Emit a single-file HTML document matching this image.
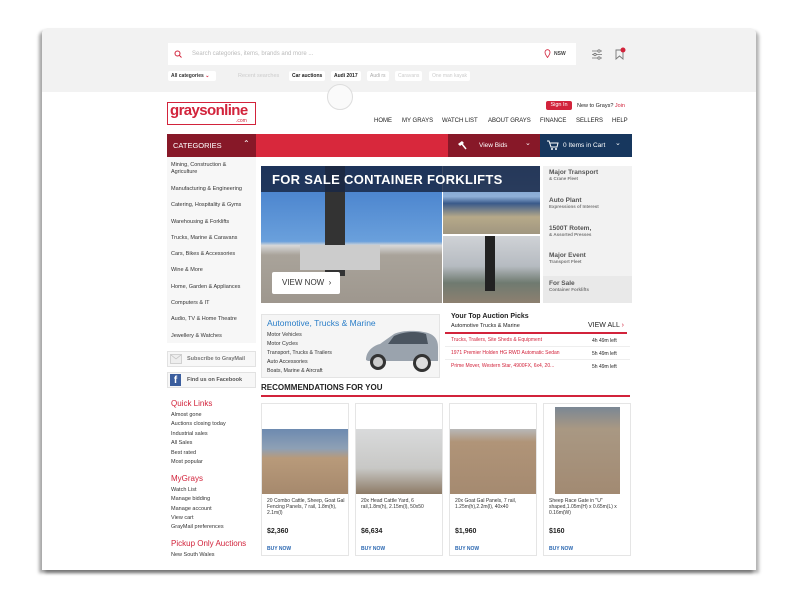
<!DOCTYPE html>
<html><head><meta charset="utf-8"><style>
*{box-sizing:border-box;margin:0;padding:0}
body{width:800px;height:600px;background:#fff;font-family:"Liberation Sans",sans-serif;position:relative;overflow:hidden;color:#222}
.a{position:absolute}
#frame{left:42px;top:28px;width:714px;height:542px;background:#fff;border-radius:6px 6px 0 0;box-shadow:-3px 3px 3px rgba(0,0,0,.35),3px 3px 3px rgba(0,0,0,.3);overflow:hidden}
.t{font-size:6px;white-space:nowrap}
.chip{position:absolute;top:71px;height:10px;background:#fff;font-size:5px;line-height:10px;padding:0 3px;border-radius:2px}
.nav{font-size:6px;top:118px}
.cat{position:absolute;left:171px;font-size:5.5px;color:#333;line-height:7px}
.rl{position:absolute;left:549px;font-size:6.5px;font-weight:bold;color:#555}
.rl small{display:block;font-size:4.5px;color:#777}
.ql{position:absolute;left:171px;font-size:5.5px;color:#333}
.h{position:absolute;left:171px;font-size:8px;color:#d2233b}
.card{position:absolute;top:403px;width:88px;height:153px;border:1px solid #e5e5e5;background:#fff}
.card .d{position:absolute;left:5px;top:94px;width:80px;font-size:5px;line-height:6px;color:#333}
.card .p{position:absolute;left:5px;top:124px;font-size:7px;font-weight:bold}
.card .b{position:absolute;left:5px;top:142px;font-size:5px;font-weight:bold;color:#2a67b1}
.img{position:absolute;left:0;top:25px;width:86px;height:65px;background:linear-gradient(#6d8ab0 0,#8ea0b5 30%,#b89a7a 45%,#a6896d 100%)}
</style></head><body>
<div id="frame" class="a"></div>
<div class="a" style="left:42px;top:28px;width:714px;height:64px;background:#f2f2f2;border-radius:6px 6px 0 0"></div>
<div class="a" style="left:168px;top:43px;width:408px;height:22px;background:#fff"></div>
<svg class="a" style="left:174px;top:50px" width="8" height="8"><circle cx="3.5" cy="3.5" r="2.5" fill="none" stroke="#d2233b" stroke-width="1"/><line x1="5.3" y1="5.3" x2="7.5" y2="7.5" stroke="#d2233b"/></svg>
<div class="a t" style="left:192px;top:51px;color:#bbb">Search categories, items, brands and more ...</div>
<svg class="a" style="left:544px;top:49px" width="7" height="9"><path d="M3.5 8.5C1 5 1 4 1 3.2a2.5 2.5 0 015 0C6 4 6 5 3.5 8.5z" fill="none" stroke="#d2233b" stroke-width=".8"/></svg>
<div class="a t" style="left:554px;top:51px;font-size:5px;font-weight:bold;color:#444">NSW</div>
<svg class="a" style="left:591px;top:49px" width="12" height="11" stroke="#777" stroke-width=".8"><line x1="1" y1="2" x2="11" y2="2"/><line x1="1" y1="5.5" x2="11" y2="5.5"/><line x1="1" y1="9" x2="11" y2="9"/><circle cx="8" cy="2" r="1.2" fill="#f2f2f2"/><circle cx="4" cy="5.5" r="1.2" fill="#f2f2f2"/><circle cx="8" cy="9" r="1.2" fill="#f2f2f2"/></svg>
<svg class="a" style="left:614px;top:46px" width="12" height="14"><path d="M2 4h7v9l-3.5-3L2 13z" fill="none" stroke="#777" stroke-width=".9"/><circle cx="9" cy="4" r="2.5" fill="#d2233b"/></svg>
<div class="chip" style="left:168px;width:48px;font-weight:bold;color:#333">All categories <span style="color:#d2233b">⌄</span></div>
<div class="a t" style="left:238px;top:73px;color:#ccc;font-size:5.5px">Recent searches</div>
<div class="chip" style="left:289px;font-weight:bold">Car auctions</div>
<div class="chip" style="left:331px;font-weight:bold">Audi 2017</div>
<div class="chip" style="left:367px;color:#aaa">Audi rs</div>
<div class="chip" style="left:395px;color:#ccc">Caravans</div>
<div class="chip" style="left:429px;color:#ccc">One man kayak</div>
<div class="a" style="left:327px;top:84px;width:26px;height:26px;border-radius:50%;border:1.5px solid #ddd;background:#fafafa"></div>
<div class="a" style="left:167px;top:102px;width:89px;height:23px;border:1.5px solid #d2233b;background:#fff"></div>
<div class="a" style="left:170px;top:102px;font-size:15px;font-weight:bold;color:#d2233b;letter-spacing:-.6px">graysonline</div>
<div class="a" style="left:236px;top:118px;font-size:5px;color:#d2233b">.com</div>
<div class="a" style="left:546px;top:101px;width:26px;height:9px;background:#d2233b;border-radius:2px;color:#fff;font-size:5.5px;text-align:center;line-height:9px">Sign In</div>
<div class="a t" style="left:577px;top:103px;font-size:5.5px">New to Grays? <span style="color:#d2233b">Join</span></div>
<div class="a nav" style="left:374px">HOME</div>
<div class="a nav" style="left:402px">MY GRAYS</div>
<div class="a nav" style="left:442px">WATCH LIST</div>
<div class="a nav" style="left:488px">ABOUT GRAYS</div>
<div class="a nav" style="left:540px">FINANCE</div>
<div class="a nav" style="left:576px">SELLERS</div>
<div class="a nav" style="left:612px">HELP</div>
<div class="a" style="left:167px;top:134px;width:465px;height:23px;background:#d8283c"></div>
<div class="a" style="left:167px;top:134px;width:89px;height:23px;background:#871828"></div>
<div class="a" style="left:173px;top:141px;color:#fff;font-size:7.5px">CATEGORIES</div>
<div class="a" style="left:243px;top:139px;color:#fff;font-size:8px">⌃</div>
<div class="a" style="left:448px;top:134px;width:92px;height:23px;background:#871828"></div>
<svg class="a" style="left:456px;top:140px" width="11" height="10"><path d="M2 4l4-3 2 2-4 3z" fill="#fff"/><line x1="6" y1="4" x2="10" y2="9" stroke="#fff" stroke-width="1.5"/></svg>
<div class="a" style="left:479px;top:142px;color:#fff;font-size:6.5px">View Bids</div>
<div class="a" style="left:525px;top:139px;color:#fff;font-size:7px">⌄</div>
<div class="a" style="left:540px;top:134px;width:92px;height:23px;background:#17375e"></div>
<svg class="a" style="left:547px;top:140px" width="12" height="10"><path d="M0 1h2l2 6h6l1-4H3" fill="none" stroke="#fff"/><circle cx="5" cy="9" r="1" fill="#fff"/><circle cx="9" cy="9" r="1" fill="#fff"/></svg>
<div class="a" style="left:563px;top:142px;color:#fff;font-size:6.5px">0 Items in Cart</div>
<div class="a" style="left:615px;top:139px;color:#fff;font-size:7px">⌄</div>
<div class="a" style="left:167px;top:157px;width:89px;height:186px;background:#f7f7f7"></div>
<div class="cat" style="top:162px">Mining, Construction &amp;<br>Agriculture</div>
<div class="cat" style="top:186px">Manufacturing &amp; Engineering</div>
<div class="cat" style="top:202px">Catering, Hospitality &amp; Gyms</div>
<div class="cat" style="top:219px">Warehousing &amp; Forklifts</div>
<div class="cat" style="top:235px">Trucks, Marine &amp; Caravans</div>
<div class="cat" style="top:251px">Cars, Bikes &amp; Accessories</div>
<div class="cat" style="top:267px">Wine &amp; More</div>
<div class="cat" style="top:284px">Home, Garden &amp; Appliances</div>
<div class="cat" style="top:300px">Computers &amp; IT</div>
<div class="cat" style="top:316px">Audio, TV &amp; Home Theatre</div>
<div class="cat" style="top:333px">Jewellery &amp; Watches</div>
<div class="a" style="left:261px;top:166px;width:181px;height:137px;background:linear-gradient(#3d78c8 0,#6aa0dc 55%,#d8d8d8 58%,#a9a39a 65%,#9e978e 100%)"></div>
<div class="a" style="left:325px;top:166px;width:20px;height:110px;background:#333"></div>
<div class="a" style="left:300px;top:245px;width:80px;height:25px;background:#ccc"></div>
<div class="a" style="left:443px;top:166px;width:97px;height:68px;background:linear-gradient(#6a92c8 0,#8fb0d8 45%,#3a5a8a 55%,#b6a989 75%,#a09680 100%)"></div>
<div class="a" style="left:443px;top:236px;width:97px;height:67px;background:linear-gradient(#cfd2d6 0,#b6bbc1 45%,#6f7a70 70%,#8d8070 100%)"></div>
<div class="a" style="left:485px;top:236px;width:10px;height:55px;background:#222"></div>
<div class="a" style="left:261px;top:166px;width:279px;height:26px;background:rgba(25,40,70,.85)"></div>
<div class="a" style="left:272px;top:172px;color:#fff;font-size:13px;font-weight:bold;letter-spacing:.3px">FOR SALE CONTAINER FORKLIFTS</div>
<div class="a" style="left:272px;top:272px;width:68px;height:22px;background:#fff;border-radius:2px;font-size:8px;line-height:22px;padding-left:10px;color:#333">VIEW NOW &nbsp;›</div>
<div class="a" style="left:543px;top:166px;width:89px;height:137px;background:#f2f2f2"></div>
<div class="rl" style="top:169px">Major Transport<small>&amp; Crane Fleet</small></div>
<div class="rl" style="top:197px">Auto Plant<small>Expressions of Interest</small></div>
<div class="rl" style="top:225px">1500T Rotem,<small>&amp; Assorted Presses</small></div>
<div class="rl" style="top:252px">Major Event<small>Transport Fleet</small></div>
<div class="a" style="left:543px;top:276px;width:89px;height:27px;background:#e9e9e9"></div>
<div class="rl" style="top:280px">For Sale<small>Container Forklifts</small></div>
<div class="a" style="left:261px;top:314px;width:179px;height:64px;background:#f5f5f5;border:1px solid #e4e4e4"></div>
<div class="a t" style="left:267px;top:318px;font-size:8.5px;color:#2a7ec8">Automotive, Trucks &amp; Marine</div>
<div class="a" style="left:267px;top:331px;font-size:5.3px;line-height:9px;color:#333">Motor Vehicles<br>Motor Cycles<br>Transport, Trucks &amp; Trailers<br>Auto Accessories<br>Boats, Marine &amp; Aircraft</div>
<svg class="a" style="left:364px;top:320px" width="76" height="55"><path d="M2 40c0-8 6-14 14-16l14-10c8-4 24-4 34-1 6 2 10 6 10 14v14H4z" fill="#9aa3ad"/><path d="M30 16c10-5 24-5 32-2l2 10H24z" fill="#4b5560"/><circle cx="14" cy="42" r="8" fill="#333"/><circle cx="14" cy="42" r="5" fill="#ccc"/><circle cx="58" cy="43" r="9" fill="#333"/><circle cx="58" cy="43" r="6" fill="#ddd"/></svg>
<div class="a t" style="left:451px;top:313px;font-size:7px;font-weight:bold">Your Top Auction Picks</div>
<div class="a t" style="left:451px;top:323px;font-size:5.5px">Automotive Trucks &amp; Marine</div>
<div class="a t" style="left:588px;top:322px;font-size:7px">VIEW ALL <span style="color:#d2233b">›</span></div>
<div class="a" style="left:445px;top:332px;width:182px;height:1.5px;background:#d2233b"></div>
<div class="a t" style="left:451px;top:337px;font-size:5px;color:#d2233b">Trucks, Trailers, Site Sheds &amp; Equipment</div>
<div class="a t" style="left:451px;top:350px;font-size:5px;color:#d2233b">1971 Premier Holden HG RWD Automatic Sedan</div>
<div class="a t" style="left:451px;top:363px;font-size:5px;color:#d2233b">Prime Mover, Western Star, 4900FX, 6x4, 20...</div>
<div class="a t" style="left:592px;top:338px;font-size:5px">4h 49m left</div>
<div class="a t" style="left:592px;top:351px;font-size:5px">5h 49m left</div>
<div class="a t" style="left:592px;top:364px;font-size:5px">5h 49m left</div>
<div class="a" style="left:445px;top:346px;width:185px;height:1px;background:#eee"></div>
<div class="a" style="left:445px;top:359px;width:185px;height:1px;background:#eee"></div>
<div class="a t" style="left:261px;top:383px;font-size:8px;font-weight:bold">RECOMMENDATIONS FOR YOU</div>
<div class="a" style="left:261px;top:395px;width:369px;height:2px;background:#d2233b"></div>
<div class="card" style="left:261px"><div class="img"></div><div class="d">20 Combo Cattle, Sheep, Goat Gal Fencing Panels, 7 rail, 1.8m(h), 2.1m(l)</div><div class="p">$2,360</div><div class="b">BUY NOW</div></div>
<div class="card" style="left:355px"><div class="img" style="background:linear-gradient(#d9dadb,#c8c8c6 60%,#8d7a66)"></div><div class="d">20x Head Cattle Yard, 6 rail,1.8m(h), 2.15m(l), 50x50</div><div class="p">$6,634</div><div class="b">BUY NOW</div></div>
<div class="card" style="left:449px"><div class="img" style="background:linear-gradient(#b8b8b8 0,#b09478 20%,#a58a70)"></div><div class="d">20x Goat Gal Panels, 7 rail, 1.25m(h),2.2m(l), 40x40</div><div class="p">$1,960</div><div class="b">BUY NOW</div></div>
<div class="card" style="left:543px"><div class="img" style="left:11px;top:3px;width:65px;height:87px;background:linear-gradient(#7b8794 0,#a99883 25%,#a28a72)"></div><div class="d">Sheep Race Gate in "U" shaped,1.05m(H) x 0.65m(L) x 0.16m(W)</div><div class="p">$160</div><div class="b">BUY NOW</div></div>
<div class="a" style="left:167px;top:351px;width:89px;height:16px;border:1px solid #e2e2e2;background:#f7f7f7"></div>
<svg class="a" style="left:170px;top:354px" width="12" height="10"><rect x=".5" y=".5" width="11" height="9" fill="#eee" stroke="#bbb" stroke-width=".6"/><path d="M.5 .5L6 5l5.5-4.5" fill="none" stroke="#bbb" stroke-width=".6"/></svg>
<div class="a t" style="left:187px;top:356px;font-size:5.5px;font-weight:bold;color:#777">Subscribe to GrayMail</div>
<div class="a" style="left:167px;top:372px;width:89px;height:16px;border:1px solid #e2e2e2;background:#f7f7f7"></div>
<div class="a" style="left:170px;top:374px;width:11px;height:12px;background:#3b5e9e;color:#fff;font-size:10px;font-weight:bold;text-align:center;line-height:14px">f</div>
<div class="a t" style="left:187px;top:377px;font-size:5.5px;font-weight:bold;color:#555">Find us on Facebook</div>
<div class="h" style="top:399px">Quick Links</div>
<div class="ql" style="top:412px">Almost gone</div>
<div class="ql" style="top:421px">Auctions closing today</div>
<div class="ql" style="top:431px">Industrial sales</div>
<div class="ql" style="top:440px">All Sales</div>
<div class="ql" style="top:450px">Best rated</div>
<div class="ql" style="top:459px">Most popular</div>
<div class="h" style="top:474px">MyGrays</div>
<div class="ql" style="top:487px">Watch List</div>
<div class="ql" style="top:496px">Manage bidding</div>
<div class="ql" style="top:506px">Manage account</div>
<div class="ql" style="top:515px">View cart</div>
<div class="ql" style="top:524px">GrayMail preferences</div>
<div class="h" style="top:539px">Pickup Only Auctions</div>
<div class="ql" style="top:552px">New South Wales</div>
</body></html>
